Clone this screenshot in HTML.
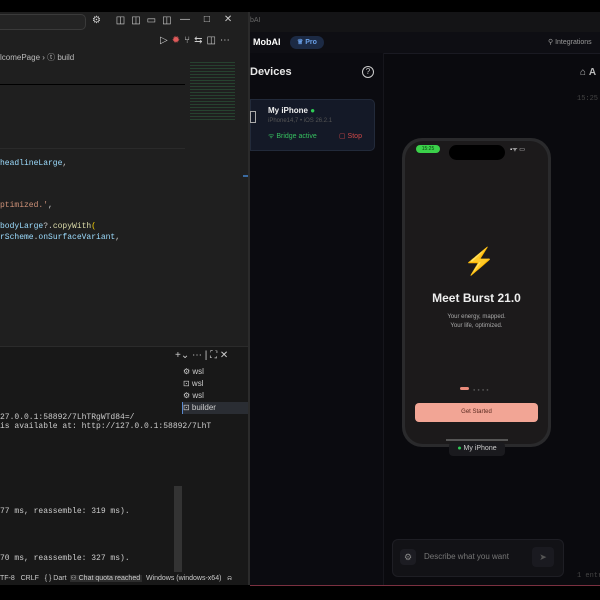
<html><head><style>
body{margin:0;width:600px;height:600px;background:#000;position:relative;overflow:hidden;font-family:"Liberation Sans",sans-serif}
.a{position:absolute;white-space:nowrap}
.m{font-family:"Liberation Mono",monospace;font-size:8px;white-space:pre}
</style></head><body>
<div class="a" style="left:0;top:12px;width:248px;height:573px;background:#1f1f1f"></div>
<div class="a" style="left:0;top:14px;width:85px;height:14px;border:1px solid #3a3a3a;border-left:none;border-radius:0 5px 5px 0;background:#242424"></div>
<div class="a" style="left:92px;top:15px;color:#ccc;font-size:10px;letter-spacing:6px">⚙ ◫◫▭◫</div>
<div class="a" style="left:180px;top:14px;color:#ccc;font-size:10px">—&nbsp;&nbsp;&nbsp;&nbsp;&nbsp;□&nbsp;&nbsp;&nbsp;&nbsp;&nbsp;✕</div>
<div class="a" style="left:160px;top:35px;color:#ccc;font-size:10px;letter-spacing:4px">▷<span style="color:#e05a5a">✹</span>⑂⇆◫⋯</div>
<div class="a" style="left:0;top:52px;color:#bbb;font-size:8px">lcomePage › ⓣ build</div>
<div class="a" style="left:0;top:84px;width:185px;height:1px;background:#000"></div>
<div class="a" style="left:0;top:148px;width:185px;height:1px;background:#2a2a2a"></div>
<div class="a" style="left:190px;top:62px;width:45px;height:60px;opacity:.6;background:repeating-linear-gradient(#2a5a3a 0 1px,transparent 1px 3px)"></div>
<div class="a" style="left:243px;top:175px;width:5px;height:2px;background:#3a6aa0"></div>
<div class="a m" style="left:0;top:159px;color:#9cdcfe">headlineLarge<span style="color:#ccc">,</span></div>
<div class="a m" style="left:0;top:201px;color:#ce9178">ptimized.'<span style="color:#ccc">,</span></div>
<div class="a m" style="left:0;top:222px;color:#9cdcfe">bodyLarge<span style="color:#ccc">?.</span><span style="color:#dcdcaa">copyWith</span><span style="color:#ffd700">(</span></div>
<div class="a m" style="left:0;top:233px;color:#9cdcfe">rScheme<span style="color:#ccc">.</span>onSurfaceVariant<span style="color:#ccc">,</span></div>
<div class="a" style="left:0;top:346px;width:248px;height:226px;background:#181818;border-top:1px solid #2b2b2b"></div>
<div class="a" style="left:175px;top:350px;color:#ccc;font-size:10px">+⌄ ⋯ | ⛶ ✕</div>
<div class="a" style="left:183px;top:366px;color:#ccc;font-size:8px;line-height:12px">⚙ wsl<br>⊡ wsl<br>⚙ wsl</div>
<div class="a" style="left:182px;top:402px;width:66px;height:12px;background:#2a2d33;border-left:1px solid #5a8ad0;color:#ccc;font-size:8px;line-height:12px">⊡ builder</div>
<div class="a" style="left:174px;top:486px;width:8px;height:86px;background:#333"></div>
<div class="a m" style="left:0;top:413px;color:#ccc">27.0.0.1:58892/7LhTRgWTd84=/
is available at: http://127.0.0.1:58892/7LhT</div>
<div class="a m" style="left:0;top:507px;color:#ccc">77 ms, reassemble: 319 ms).</div>
<div class="a m" style="left:0;top:554px;color:#ccc">70 ms, reassemble: 327 ms).</div>
<div class="a" style="left:0;top:573px;width:248px;height:12px;background:#181818;color:#ccc;font-size:7px;line-height:12px;white-space:pre">TF-8   CRLF   { } Dart  <span style="background:#2d2d2d">⚇ Chat quota reached </span>  Windows (windows-x64)   ⍾</div>
<div class="a" style="left:248px;top:12px;width:2px;height:573px;background:#2b2b2b"></div>
<div class="a" style="left:250px;top:12px;width:350px;height:573px;background:#0a0a0e"></div>
<div class="a" style="left:250px;top:12px;width:350px;height:20px;background:#141416;color:#666;font-size:7px;line-height:18px">bAI</div>
<div class="a" style="left:250px;top:32px;width:350px;height:21px;background:#0e0e13;border-bottom:1px solid #1a1a22"></div>
<div class="a" style="left:253px;top:37px;color:#fff;font-weight:bold;font-size:9px">MobAI</div>
<div class="a" style="left:290px;top:36px;width:34px;height:13px;border-radius:7px;background:#1c2a44;color:#6aa0e8;font-size:7px;line-height:13px;text-align:center;font-weight:bold">♕ Pro</div>
<div class="a" style="left:548px;top:38px;color:#999;font-size:7px">⚲ Integrations</div>
<div class="a" style="left:250px;top:53px;width:133px;height:532px;background:#0b0b10;border-right:1px solid #16161c"></div>
<div class="a" style="left:250px;top:66px;color:#e8e8e8;font-weight:bold;font-size:11px">Devices</div>
<div class="a" style="left:362px;top:66px;width:10px;height:10px;border:1px solid #ccc;border-radius:50%;color:#ccc;font-size:8px;text-align:center;line-height:10px">?</div>
<div class="a" style="left:250px;top:99px;width:123px;height:50px;background:#141927;border:1px solid #222a3a;border-radius:0 5px 5px 0"></div>
<div class="a" style="left:250px;top:111px;width:4px;height:10px;border:1px solid #aaa"></div>
<div class="a" style="left:268px;top:106px;color:#eee;font-weight:bold;font-size:8px">My iPhone <span style="color:#2ecc55">●</span></div>
<div class="a" style="left:268px;top:118px;color:#555;font-size:6px">iPhone14,7 • iOS 26.2.1</div>
<div class="a" style="left:268px;top:132px;color:#36c060;font-size:7px">ᯤ Bridge active</div>
<div class="a" style="left:339px;top:132px;color:#d04848;font-size:7px">▢ Stop</div>
<div class="a" style="left:580px;top:67px;color:#bbb;font-size:10px">⌂ <b>A</b></div>
<div class="a" style="left:577px;top:95px;color:#444;font-size:7px;font-family:'Liberation Mono',monospace">15:25</div>
<div class="a" style="left:577px;top:572px;color:#444;font-size:7px;font-family:'Liberation Mono',monospace">1 entr</div>
<div class="a" style="left:402px;top:138px;width:149px;height:309px;background:#2a2a2c;border-radius:20px"></div>
<div class="a" style="left:405px;top:141px;width:143px;height:303px;background:#1c1a1b;border-radius:18px"></div>
<div class="a" style="left:416px;top:145px;width:24px;height:8px;background:#3bd14a;border-radius:4px;color:#0a4010;font-size:5px;text-align:center;line-height:8px">15:25</div>
<div class="a" style="left:449px;top:145px;width:56px;height:15px;background:#000;border-radius:8px"></div>
<div class="a" style="left:510px;top:145px;color:#ddd;font-size:6px">▪ᯤ ▭</div>
<div class="a" style="left:463px;top:246px;font-size:26px;color:#f0c030">⚡</div>
<div class="a" style="left:405px;top:291px;width:143px;text-align:center;color:#eee;font-weight:bold;font-size:12px">Meet Burst 21.0</div>
<div class="a" style="left:405px;top:313px;width:143px;text-align:center;color:#aaa;font-size:6px;line-height:9px">Your energy, mapped.<br>Your life, optimized.</div>
<div class="a" style="left:460px;top:387px;width:9px;height:3px;background:#e88a7a;border-radius:2px"></div>
<div class="a" style="left:473px;top:387px;color:#555;font-size:4px;letter-spacing:2px">●●●●</div>
<div class="a" style="left:415px;top:403px;width:123px;height:19px;background:#f2a595;border-radius:4px;color:#5a2a20;font-size:6px;text-align:center;line-height:19px">Get Started</div>
<div class="a" style="left:446px;top:439px;width:62px;height:2px;background:#555"></div>
<div class="a" style="left:449px;top:442px;width:56px;height:14px;background:#1a1a1e;border-radius:4px;color:#ccc;font-size:7px;line-height:14px;text-align:center"><span style="color:#2ecc55">●</span> My iPhone</div>
<div class="a" style="left:392px;top:539px;width:170px;height:36px;background:#121216;border:1px solid #1e1e24;border-radius:6px"></div>
<div class="a" style="left:400px;top:549px;width:16px;height:16px;background:#1c1c22;border-radius:4px;color:#888;font-size:9px;text-align:center;line-height:16px">⚙</div>
<div class="a" style="left:424px;top:552px;color:#777;font-size:8px">Describe what you want</div>
<div class="a" style="left:532px;top:547px;width:22px;height:20px;background:#1a1a20;border-radius:4px;color:#555;font-size:9px;text-align:center;line-height:20px">➤</div>
<div class="a" style="left:250px;top:585px;width:350px;height:1px;background:#7a3040"></div>
</body></html>
